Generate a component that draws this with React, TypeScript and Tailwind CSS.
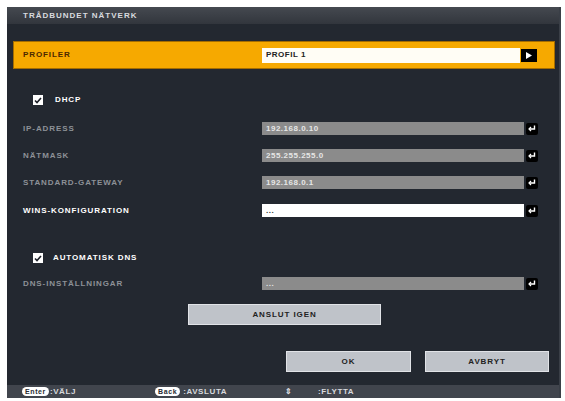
import React from 'react'

const font = { fontFamily: '"Liberation Sans", Arial, sans-serif' }

function EnterKey() {
  return (
    <div className="w-[12px] h-[12px] bg-black rounded-[2px] flex items-center justify-center">
      <svg width="8" height="7" viewBox="0 0 8 7" fill="none">
        <path d="M6.5 0.5 V4 H1.5" stroke="white" strokeWidth="1.4" />
        <path d="M3 2 L1 4 L3 6" stroke="white" strokeWidth="1.2" fill="none" />
      </svg>
    </div>
  )
}

function Check() {
  return (
    <div className="w-[10px] h-[10px] bg-white flex items-center justify-center">
      <svg width="8" height="7" viewBox="0 0 8 7" fill="none">
        <path d="M1 3.5 L3 5.5 L7 1" stroke="#1d2028" strokeWidth="1.6" />
      </svg>
    </div>
  )
}

interface RowProps {
  label: string
  value: string
  active?: boolean
  className?: string
}

function FieldRow({ label, value, active, className }: RowProps) {
  return (
    <div className={`flex items-center h-[13px] ${className ?? ''}`}>
      <div
        className={`w-[255px] pl-[16px] text-[8px] font-bold tracking-[0.9px] ${
          active ? 'text-white' : 'text-[#8d9197]'
        }`}
      >
        {label}
      </div>
      <div
        className={`w-[262px] h-[13px] flex items-center pl-[4px] text-[8px] font-bold tracking-[0.5px] ${
          active ? 'bg-white text-[#333]' : 'bg-[#8b8b8b] text-[#e6e6e6]'
        }`}
      >
        {value}
      </div>
      <div className="ml-[2px]">
        <EnterKey />
      </div>
    </div>
  )
}

function Pill({ children }: { children: React.ReactNode }) {
  return (
    <span className="inline-flex items-center justify-center h-[9px] px-[3px] rounded-full bg-white text-[#2a2d33] text-[7px] font-bold leading-none">
      {children}
    </span>
  )
}

export default function App() {
  return (
    <div className="w-[565px] h-[401px] bg-white pt-[7px] pl-[7px]" style={font}>
      <div className="w-[554px] h-[391px] flex flex-col bg-[#232830] border-r-[2px] border-[#3a3f47]">
        <div className="h-[17px] bg-gradient-to-b from-[#454950] to-[#32363d] flex items-center pl-[16px] text-[8px] font-bold tracking-[1px] text-[#d8dadf]">
          TRÅDBUNDET NÄTVERK
        </div>

        <div className="flex-1 flex flex-col">
          <div className="mt-[17px] ml-[6px] w-[542px] h-[28px] bg-[#f6a900] border border-[#a56d00] flex items-center">
            <div className="w-[248px] pl-[9px] text-[8px] font-bold tracking-[0.9px] text-[#4a2800]">
              PROFILER
            </div>
            <div className="w-[258px] h-[15px] bg-[#fffdf5] flex items-center pl-[4px] text-[8px] font-bold tracking-[0.5px] text-[#222]">
              PROFIL 1
            </div>
            <div className="ml-[1px] w-[16px] h-[13px] bg-black flex items-center justify-center">
              <svg width="6" height="7" viewBox="0 0 6 7">
                <path d="M0 0 L6 3.5 L0 7 Z" fill="white" />
              </svg>
            </div>
          </div>

          <div className="mt-[26px] ml-[26px] flex items-center h-[10px] gap-[12px]">
            <Check />
            <span className="text-[8px] font-bold text-white tracking-[0.9px]">DHCP</span>
          </div>

          <FieldRow className="mt-[17px]" label="IP-ADRESS" value="192.168.0.10" />
          <FieldRow className="mt-[14px]" label="NÄTMASK" value="255.255.255.0" />
          <FieldRow className="mt-[14px]" label="STANDARD-GATEWAY" value="192.168.0.1" />
          <FieldRow className="mt-[15px]" label="WINS-KONFIGURATION" value="..." active />

          <div className="mt-[36px] ml-[26px] flex items-center h-[10px] gap-[10px]">
            <Check />
            <span className="text-[8px] font-bold text-white tracking-[0.9px]">AUTOMATISK DNS</span>
          </div>

          <FieldRow className="mt-[14px]" label="DNS-INSTÄLLNINGAR" value="..." />

          <div className="mt-[14px] ml-[181px] w-[193px] h-[21px] bg-[#bfc3c9] border border-[#e1e3e7] flex items-center justify-center text-[8px] font-bold text-[#222] tracking-[0.9px]">
            ANSLUT IGEN
          </div>

          <div className="mt-[26px] ml-[279px] flex gap-[14px]">
            <div className="w-[125px] h-[21px] bg-[#bfc3c9] border border-[#e1e3e7] flex items-center justify-center text-[8px] font-bold text-[#222] tracking-[0.9px]">
              OK
            </div>
            <div className="w-[124px] h-[21px] bg-[#bfc3c9] border border-[#e1e3e7] flex items-center justify-center text-[8px] font-bold text-[#222] tracking-[0.9px]">
              AVBRYT
            </div>
          </div>
        </div>

        <div className="h-[13px] bg-[#41454d] flex items-center text-[8px] font-bold tracking-[0.6px] text-[#d8dade]">
          <div className="ml-[15px] flex items-center gap-[1px] w-[133px]">
            <Pill>Enter</Pill>
            <span>:VÄLJ</span>
          </div>
          <div className="flex items-center gap-[3px] w-[130px]">
            <Pill>Back</Pill>
            <span>:AVSLUTA</span>
          </div>
          <div className="flex items-center">
            <span className="w-[33px]">⇕</span>
            <span>:FLYTTA</span>
          </div>
        </div>
      </div>
    </div>
  )
}
